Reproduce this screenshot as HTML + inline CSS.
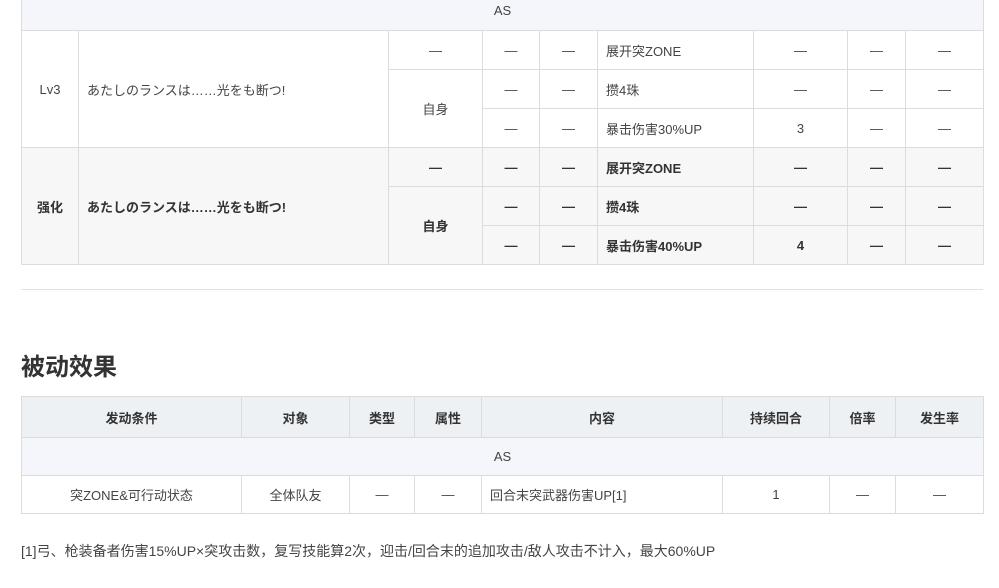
<!DOCTYPE html>
<html><head><meta charset="utf-8"><style>
body{margin:0;width:999px;height:588px;background:#fff;overflow:hidden;position:relative;font-family:"Liberation Sans","Noto Sans CJK SC",sans-serif;color:#444;font-size:13px}
table{position:absolute;left:21px;border-collapse:collapse;table-layout:fixed}
td{border:1px solid #dcdcdc;text-align:center;padding:0;height:39px;box-sizing:border-box}
.as td{background:#f5f5fc}
.b td{background:#f7f7f7;font-weight:bold;color:#333}
.l{text-align:left;padding-left:8px}
th{border:1px solid #dcdcdc;background:#eef1f4;font-weight:bold;color:#333;height:38px;font-size:13px}
.t2 td{height:38px}
h2{position:absolute;left:21px;top:347px;margin:0;font-size:24px;color:#333;font-weight:bold}
.hr{position:absolute;left:21px;width:962px;top:289px;border-top:1px solid #e2e2e2}
.fn{position:absolute;left:21px;top:541px;font-size:14px;color:#444}
</style></head><body>
<table style="top:-10px;width:962px">
<colgroup><col style="width:57px"><col style="width:310px"><col style="width:94px"><col style="width:57px"><col style="width:58px"><col style="width:156px"><col style="width:94px"><col style="width:58px"><col style="width:78px"></colgroup>
<tr class="as"><td colspan="9" style="height:40px">AS</td></tr>
<tr><td rowspan="3">Lv3</td><td rowspan="3" class="l">あたしのランスは……光をも断つ!</td><td>—</td><td>—</td><td>—</td><td class="l">展开突ZONE</td><td>—</td><td>—</td><td>—</td></tr>
<tr><td rowspan="2">自身</td><td>—</td><td>—</td><td class="l">攒4珠</td><td>—</td><td>—</td><td>—</td></tr>
<tr><td>—</td><td>—</td><td class="l">暴击伤害30%UP</td><td>3</td><td>—</td><td>—</td></tr>
<tr class="b"><td rowspan="3">强化</td><td rowspan="3" class="l">あたしのランスは……光をも断つ!</td><td>—</td><td>—</td><td>—</td><td class="l">展开突ZONE</td><td>—</td><td>—</td><td>—</td></tr>
<tr class="b"><td rowspan="2">自身</td><td>—</td><td>—</td><td class="l">攒4珠</td><td>—</td><td>—</td><td>—</td></tr>
<tr class="b"><td>—</td><td>—</td><td class="l">暴击伤害40%UP</td><td>4</td><td>—</td><td>—</td></tr>
</table>
<div class="hr"></div>
<h2>被动效果</h2>
<table class="t2" style="top:396px;width:962px">
<colgroup><col style="width:220px"><col style="width:108px"><col style="width:65px"><col style="width:67px"><col style="width:241px"><col style="width:107px"><col style="width:66px"><col style="width:88px"></colgroup>
<tr><th>发动条件</th><th>对象</th><th>类型</th><th>属性</th><th>内容</th><th>持续回合</th><th>倍率</th><th>发生率</th></tr>
<tr class="as"><td colspan="8">AS</td></tr>
<tr><td>突ZONE&amp;可行动状态</td><td>全体队友</td><td>—</td><td>—</td><td class="l">回合末突武器伤害UP[1]</td><td>1</td><td>—</td><td>—</td></tr>
</table>
<div class="fn">[1]弓、枪装备者伤害15%UP×突攻击数，复写技能算2次，迎击/回合末的追加攻击/敌人攻击不计入，最大60%UP</div>
</body></html>
